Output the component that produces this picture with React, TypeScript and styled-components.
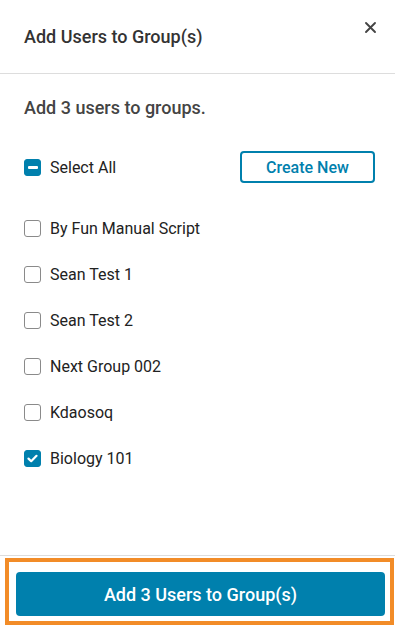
import React, {useState} from "react";
import styled, {createGlobalStyle} from "styled-components";

const GlobalStyle = createGlobalStyle`
    html, body {
        margin: 0;
        padding: 0;
        background: #ffffff;
    }
    body {
        font-family: Roboto, "Liberation Sans", Arial, sans-serif;
        -webkit-font-smoothing: antialiased;
    }
`;

const Panel = styled.div`
    width: 395px;
    height: 629px;
    display: flex;
    flex-direction: column;
    background: #ffffff;
    box-sizing: border-box;
`;

const Header = styled.div`
    height: 73px;
    display: flex;
    align-items: center;
    justify-content: space-between;
    padding: 0 18px 0 24px;
    border-bottom: 1px solid #dddddd;
    flex-shrink: 0;
`;

const Title = styled.h2`
    margin: 0;
    font-size: 18px;
    font-weight: 500;
    color: #333333;
`;

const CloseButton = styled.button`
    align-self: flex-start;
    margin-top: 21px;
    width: 13px;
    height: 13px;
    padding: 0;
    border: none;
    background: none;
    cursor: pointer;
    display: flex;
`;

const Body = styled.div`
    flex: 1;
    padding: 22px 20px 0 24px;
    display: flex;
    flex-direction: column;
`;

const Subtitle = styled.div`
    font-size: 18px;
    font-weight: 500;
    line-height: 24px;
    color: #444444;
`;

const SelectRow = styled.div`
    margin-top: 31px;
    height: 32px;
    display: flex;
    align-items: center;
    justify-content: space-between;
`;

const OutlineButton = styled.button`
    width: 135px;
    height: 32px;
    border: 2px solid #0080ad;
    border-radius: 4px;
    background: #ffffff;
    color: #0080ad;
    font-family: Roboto, "Liberation Sans", Arial, sans-serif;
    font-size: 16px;
    font-weight: 500;
    cursor: pointer;
    padding: 0;
`;

const List = styled.div`
    margin-top: 22px;
    display: flex;
    flex-direction: column;
`;

const ItemRow = styled.label`
    height: 46px;
    display: flex;
    align-items: center;
    gap: 9px;
    font-size: 16px;
    color: #222222;
    cursor: pointer;
`;

const Box = styled.span<{ $on: boolean }>`
    width: 17px;
    height: 17px;
    box-sizing: border-box;
    border-radius: 3px;
    border: 1px solid ${(p) => (p.$on ? "#0080ad" : "#8a8a8a")};
    background: ${(p) => (p.$on ? "#0080ad" : "#ffffff")};
    display: flex;
    align-items: center;
    justify-content: center;
    flex-shrink: 0;
`;

const Footer = styled.div`
    border-top: 1px solid #dddddd;
    padding: 2px 1px 4px 5px;
    flex-shrink: 0;
`;

const Highlight = styled.div`
    border: 4px solid #f28c28;
    padding: 10px 5px 5px 7px;
`;

const PrimaryButton = styled.button`
    width: 100%;
    height: 44px;
    border: none;
    border-radius: 4px;
    background: #0080ad;
    color: #ffffff;
    font-family: Roboto, "Liberation Sans", Arial, sans-serif;
    font-size: 18px;
    font-weight: 500;
    cursor: pointer;
`;

type State = "off" | "on" | "mixed";

const Checkbox = ({state}: { state: State }) => (
    <Box $on={state !== "off"}>
        {state === "on" && (
            <svg width="11" height="9" viewBox="0 0 11 9">
                <path d="M1.5 4.6 L4.2 7.2 L9.5 1.8" fill="none" stroke="#fff" strokeWidth="2.2"
                      strokeLinecap="round" strokeLinejoin="round"/>
            </svg>
        )}
        {state === "mixed" && (
            <svg width="10" height="3" viewBox="0 0 10 3">
                <rect x="0" y="0" width="10" height="3" rx="1" fill="#fff"/>
            </svg>
        )}
    </Box>
);

const GROUPS = ["By Fun Manual Script", "Sean Test 1", "Sean Test 2", "Next Group 002", "Kdaosoq", "Biology 101"];

export default function App() {
    const [checked, setChecked] = useState<string[]>(["Biology 101"]);

    const toggle = (name: string) =>
        setChecked((prev) => (prev.includes(name) ? prev.filter((n) => n !== name) : [...prev, name]));

    const allState: State = checked.length === 0 ? "off" : checked.length === GROUPS.length ? "on" : "mixed";

    return (
        <>
            <GlobalStyle/>
            <Panel>
                <Header>
                    <Title>Add Users to Group(s)</Title>
                    <CloseButton aria-label="Close">
                        <svg width="13" height="13" viewBox="0 0 13 13">
                            <path d="M2 2 L11 11 M11 2 L2 11" stroke="#444" strokeWidth="1.9" strokeLinecap="round"/>
                        </svg>
                    </CloseButton>
                </Header>
                <Body>
                    <Subtitle>Add 3 users to groups.</Subtitle>
                    <SelectRow>
                        <ItemRow onClick={() => setChecked(allState === "on" ? [] : GROUPS)}>
                            <Checkbox state={allState}/>
                            Select All
                        </ItemRow>
                        <OutlineButton>Create New</OutlineButton>
                    </SelectRow>
                    <List>
                        {GROUPS.map((g) => (
                            <ItemRow key={g} onClick={() => toggle(g)}>
                                <Checkbox state={checked.includes(g) ? "on" : "off"}/>
                                {g}
                            </ItemRow>
                        ))}
                    </List>
                </Body>
                <Footer>
                    <Highlight>
                        <PrimaryButton>Add 3 Users to Group(s)</PrimaryButton>
                    </Highlight>
                </Footer>
            </Panel>
        </>
    );
}
